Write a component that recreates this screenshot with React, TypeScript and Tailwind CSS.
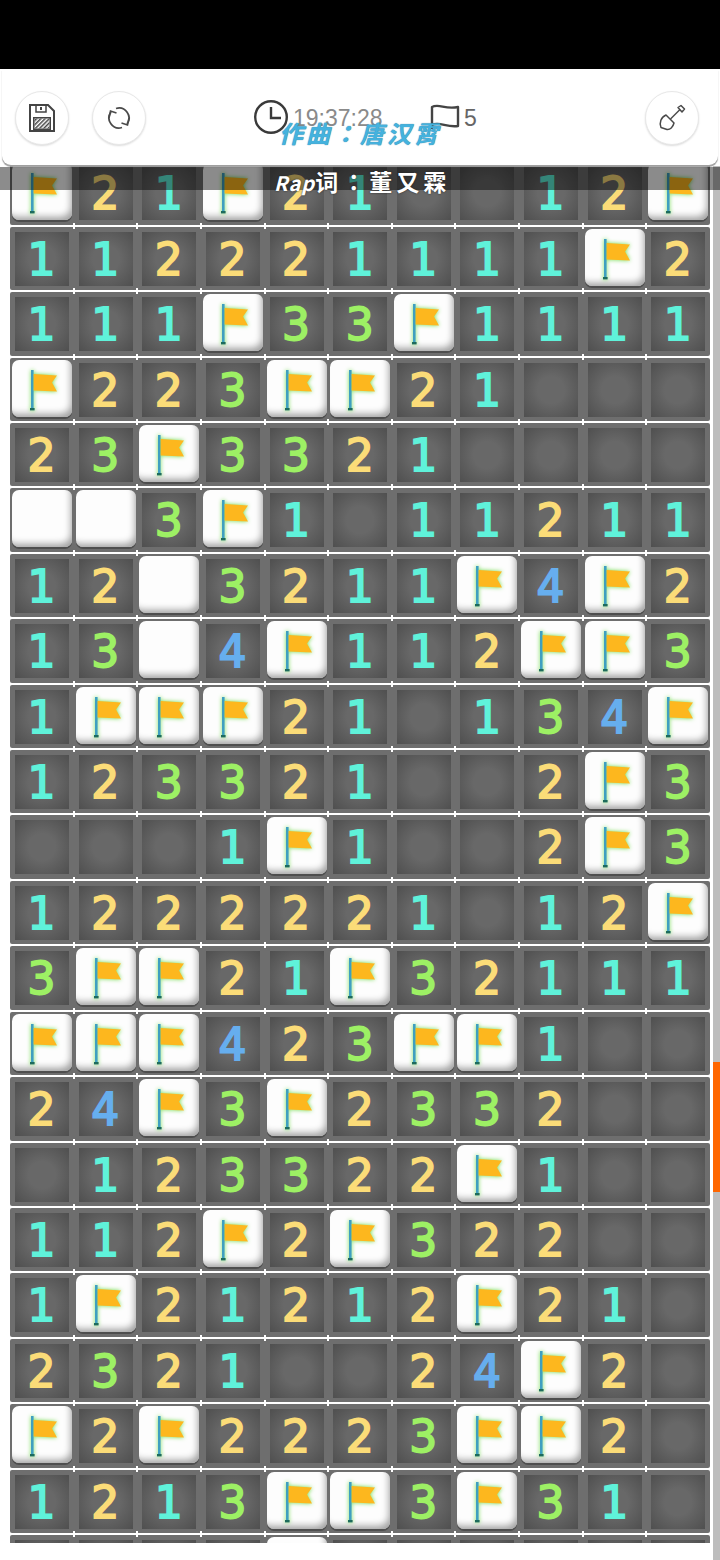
const rows = [
  'F21F21__12F',
  '112221111F2',
  '111F33F1111',
  'F223FF21___',
  '23F3321____',
  'WW3F1_11211',
  '12W3211F4F2',
  '13W4F112FF3',
  '1FFF21_134F',
  '123321__2F3',
  '___1F1__2F3',
  '1222221_12F',
  '3FF21F32111',
  'FFF423FF1__',
  '24F3F2332__',
  '_123322F1__',
  '112F2F322__',
  '1F21212F21_',
  '2321__24F2_',
  'F2F2223FF2_',
  '1213FF3F31_',
  '____F______',
];

const digitColors: Record<string, string> = {
  '1': 'text-[#5ff2da]',
  '2': 'text-[#fbdc78]',
  '3': 'text-[#9df064]',
  '4': 'text-[#66aeee]',
};

function FlagMark() {
  return (
    <svg viewBox="0 0 60 57" className="w-full h-full">
      <g className="drop-shadow-[0_0_2px_#6fdc4a]">
        <rect x="19" y="10" width="2.6" height="40" fill="#3f9fc0" />
        <rect x="18" y="48" width="4.6" height="2.4" fill="#1d6b5c" />
        <path d="M21.6 14 L45 15.5 L40 22.5 L45 31.5 L21.6 30.5 Z" fill="#fdb71e" />
      </g>
    </svg>
  );
}

function Tile({ flag }: { flag?: boolean }) {
  return (
    <div className="ml-[2px] mt-[2px] w-[60px] h-[57px] rounded-[7px] bg-[#fdfdfd] shadow-[inset_-4px_-6px_7px_-3px_#a0a0a0,0_2px_0_#4e4e4e]">
      {flag && <FlagMark />}
    </div>
  );
}

function Cell({ value, col }: { value: string; col: number }) {
  const isTile = value === 'F' || value === 'W';
  return (
    <div className="relative h-[63.42px]">
      {col > 0 && <div className="absolute -left-px -top-[4px] w-[2px] h-[6px] bg-white" />}
      {isTile ? (
        <Tile flag={value === 'F'} />
      ) : (
        <div className="ml-[5px] mt-[5px] w-[54px] h-[54px] pr-px pt-[2px] flex items-center justify-center bg-[radial-gradient(circle,#686868_35%,#4f4f4f_100%)]">
          {value !== '_' && (
            <span className={`font-['DejaVu_Sans',sans-serif] text-[44px] leading-none [-webkit-text-stroke:1.8px_currentColor] ${digitColors[value]}`}>
              {value}
            </span>
          )}
        </div>
      )}
    </div>
  );
}

function RoundButton({ children }: { children: React.ReactNode }) {
  return (
    <button className="w-[54px] h-[54px] rounded-full bg-white border border-[#e8e8e8] shadow-[0_1px_2px_#dcdcdc] flex items-center justify-center shrink-0">
      {children}
    </button>
  );
}

function SaveIcon() {
  return (
    <svg width="26" height="28" viewBox="0 0 26 28">
      <defs>
        <pattern id="hatch" width="3" height="3" patternUnits="userSpaceOnUse" patternTransform="rotate(45)">
          <rect width="1.5" height="3" fill="#444" />
        </pattern>
      </defs>
      <path d="M1 1 H19 L25 7 V27 H1 Z" fill="none" stroke="#444" strokeWidth="2" />
      <rect x="7" y="1" width="10" height="7" fill="none" stroke="#444" strokeWidth="1.5" />
      <rect x="11" y="3" width="2" height="3" fill="#444" />
      <rect x="4" y="13" width="18" height="13" fill="#444" />
      <rect x="5.5" y="14.5" width="15" height="10" fill="#fff" />
      <rect x="5.5" y="14.5" width="15" height="10" fill="url(#hatch)" />
    </svg>
  );
}

function RefreshIcon() {
  return (
    <svg width="26" height="26" viewBox="0 0 26 26" fill="none" stroke="#4a4a4a" strokeWidth="1.8">
      <path d="M10 3.5 A10 10 0 0 1 21 19" />
      <path d="M23 13 L21.5 20 L15.5 18" strokeWidth="1.6" />
      <path d="M16 22.5 A10 10 0 0 1 5 7" />
      <path d="M3 13 L4.5 6 L10.5 8" strokeWidth="1.6" />
    </svg>
  );
}

function ShovelIcon() {
  return (
    <svg width="28" height="28" viewBox="0 0 28 28" fill="none" stroke="#4a4a4a" strokeWidth="1.5" strokeLinejoin="round">
      <path d="M8 11 L16 19 C15 23 12 26 9 25.5 L3 23.5 C1 19 3 13 8 11 Z" />
      <path d="M12.5 15 L22 5.5" />
      <path d="M20 3.5 L23 1.5 L26.5 5 L24 8 Z" />
    </svg>
  );
}

function ClockIcon() {
  return (
    <svg width="36" height="36" viewBox="0 0 36 36" fill="none" stroke="#3a3a3a" strokeWidth="2.4">
      <circle cx="18" cy="18" r="15.8" />
      <path d="M18 8 V19 H28" />
    </svg>
  );
}

function FlagOutline() {
  return (
    <svg width="30" height="26" viewBox="0 0 30 26" fill="none" stroke="#444" strokeWidth="2.4" strokeLinejoin="round">
      <path d="M2 25 V3 C9 -1 15 6 28 3 V22 C17 24 9 17 2 21" />
    </svg>
  );
}

export default function App() {
  return (
    <div className="relative w-[720px] h-[1560px] overflow-hidden bg-white flex flex-col font-['Liberation_Sans',sans-serif]">
      <div className="h-[69px] bg-black shrink-0" />

      <header className="relative z-10 h-[96px] shrink-0 mx-[2px] rounded-b-[9px] bg-white shadow-[0_2px_1px_#a0a0a0] flex items-start pt-[22px] pl-[13px] pr-[19px]">
        <RoundButton><SaveIcon /></RoundButton>
        <div className="ml-[23px]"><RoundButton><RefreshIcon /></RoundButton></div>
        <div className="ml-[107px] mt-[8px] flex items-center">
          <ClockIcon />
          <span className="ml-[4px] mt-[3px] text-[23px] leading-none text-[#8a8a8a] w-[137px]">19:37:28</span>
          <FlagOutline />
          <span className="ml-[4px] mt-[3px] text-[23px] leading-none text-[#666]">5</span>
        </div>
        <div className="ml-auto"><RoundButton><ShovelIcon /></RoundButton></div>
      </header>

      <main className="-mt-[3.6px] h-[1381.6px] pl-[10px] overflow-hidden flex flex-col gap-[2px] shrink-0">
        {rows.map((row, r) => (
          <div key={r} className="w-[700px] shrink-0 grid grid-cols-11 bg-[#6e6e6e] rounded-[2px]">
            {row.split('').map((value, c) => (
              <Cell key={c} value={value} col={c} />
            ))}
          </div>
        ))}
      </main>

      {/* scrollbar */}
      <div className="absolute left-[713px] top-[166px] w-[7px] h-[1394px] bg-[#bdbdbd]">
        <div className="mt-[896px] h-[130px] bg-[#ff6600]" />
      </div>

      {/* lyric overlay */}
      <div className="absolute z-20 left-0 top-[167px] w-full h-[23px] bg-black/45" />
      <div className="absolute z-30 left-[279px] top-[116px] text-[24px] leading-[34px] font-bold italic tracking-[3px] text-[#45b2de] [text-shadow:0_0_1px_#1d6f94] font-['Noto_Sans_CJK_TC',sans-serif] whitespace-nowrap">
        作曲：唐汉霄
      </div>
      <div className="absolute z-30 left-[274px] top-[166px] text-[23px] leading-[30px] font-bold tracking-[4px] text-white [text-shadow:0_0_2px_#222] font-['Noto_Sans_CJK_TC',sans-serif] whitespace-nowrap">
        <span className="italic text-[20px] tracking-[1px]">Rap</span>词：董又霖
      </div>
    </div>
  );
}
